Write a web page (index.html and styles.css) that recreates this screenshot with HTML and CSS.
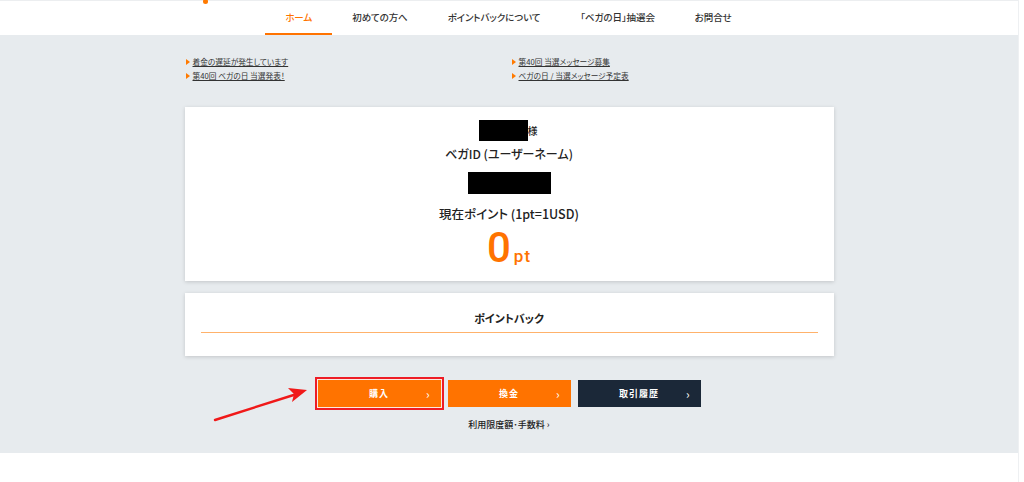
FILE: index.html
```html
<!DOCTYPE html>
<html lang="ja">

<head>
    <meta charset="UTF-8">
    <meta name="viewport" content="width=device-width, initial-scale=1.0">
    <title>ベガウォレット マイページ</title>
    <link rel="stylesheet" href="styles.css">
</head>

<body>
    <div class="page">
        <header class="header">
            <span class="logo-dot"></span>
            <nav class="nav">
                <a class="nav-item active" href="#">ホーム</a>
                <a class="nav-item" href="#">初めての方へ</a>
                <a class="nav-item" href="#">ポイントバックについて</a>
                <a class="nav-item" href="#">「ベガの日」抽選会</a>
                <a class="nav-item" href="#">お問合せ</a>
            </nav>
        </header>

        <main class="main">
            <div class="wrap">
                <ul class="news">
                    <li><a href="#">着金の遅延が発生しています</a></li>
                    <li><a href="#">第40回 当選メッセージ募集</a></li>
                    <li><a href="#">第40回 ベガの日 当選発表！</a></li>
                    <li><a href="#">ベガの日 / 当選メッセージ予定表</a></li>
                </ul>

                <section class="card account">
                    <div class="name-row"><span class="mask mask-name"></span><span class="sama">様</span></div>
                    <p class="label">ベガID (ユーザーネーム)</p>
                    <span class="mask mask-id"></span>
                    <p class="label label-point">現在ポイント (1pt=1USD)</p>
                    <p class="point"><span class="num">0</span><span class="unit">pt</span></p>
                </section>

                <section class="card pointback">
                    <h2 class="card-title">ポイントバック</h2>
                </section>

                <div class="actions">
                    <a class="btn btn-orange btn-marked" href="#"><span>購入</span><i>›</i></a>
                    <a class="btn btn-orange" href="#"><span>換金</span><i>›</i></a>
                    <a class="btn btn-dark" href="#"><span>取引履歴</span><i>›</i></a>
                </div>

                <a class="limit-link" href="#">利用限度額･手数料 ›</a>
            </div>

            <svg class="arrow" width="110" height="45" viewBox="0 0 110 45">
                <line x1="3" y1="40" x2="88" y2="13" stroke="#f01919" stroke-width="2.4" stroke-linecap="round" />
                <polygon points="95,10 76,8 82,14 80,22" fill="#f01919" />
            </svg>
        </main>

        <div class="bottom"></div>
    </div>
</body>

</html>
```

FILE: styles.css
```css
* {
    box-sizing: border-box;
}

html,
body {
    margin: 0;
    background-color: #ffffff;
}

body {
    font-family: "Noto Sans CJK JP", "Noto Sans", sans-serif;
    color: #222;
    font-feature-settings: "palt";
}

.page {
    width: 1019px;
    border-right: 1px solid #eef0f2;
}

/* header */
.header {
    position: relative;
    height: 35px;
    background-color: #fff;
    border-top: 1px solid #eceef0;
}

.logo-dot {
    position: absolute;
    left: 203px;
    top: -2px;
    width: 5px;
    height: 5px;
    border-radius: 50%;
    background-color: #ff7a00;
}

.nav {
    display: flex;
    justify-content: center;
    height: 34px;
    padding-right: 1px;
}

.nav-item {
    display: flex;
    align-items: center;
    padding: 0 20px;
    font-size: 9.5px;
    font-weight: 500;
    color: #333;
    text-decoration: none;
    letter-spacing: -0.1px;
    border-bottom: 2px solid transparent;
}

.nav-item.active {
    color: #ff7300;
    border-bottom-color: #ff7300;
}

/* main area */
.main {
    position: relative;
    background-color: #e7ebee;
    padding: 20px 0 21px;
}

.wrap {
    width: 649px;
    margin: 0 auto;
    display: flex;
    flex-direction: column;
    align-items: center;
}

.news {
    list-style: none;
    margin: 0;
    padding: 0;
    width: 100%;
    display: grid;
    grid-template-columns: 326px 1fr;
}

.news li {
    position: relative;
    height: 14px;
    line-height: 14px;
    padding-left: 8px;
    font-size: 7.7px;
}

.news li::before {
    content: "";
    position: absolute;
    left: 1px;
    top: 4px;
    border-left: 4px solid #ff7a00;
    border-top: 3px solid transparent;
    border-bottom: 3px solid transparent;
}

.news a {
    color: #333;
    text-decoration: underline;
}

.card {
    width: 100%;
    background-color: #fff;
    box-shadow: 0 1px 4px rgba(0, 0, 0, 0.16);
}

.account {
    margin-top: 24px;
    height: 174px;
    padding-top: 13px;
    display: flex;
    flex-direction: column;
    align-items: center;
}

.name-row {
    display: flex;
    align-items: center;
    height: 21px;
    padding-right: 2px;
}

.mask {
    display: block;
    background-color: #000;
}

.mask-name {
    width: 49px;
    height: 21px;
}

.sama {
    font-size: 10px;
    font-weight: 500;
}

.label {
    margin: 6px 0 0;
    font-size: 12px;
    line-height: 14px;
    font-weight: 500;
}

.mask-id {
    margin-top: 11px;
    width: 83px;
    height: 22px;
}

.label.label-point {
    margin-top: 13px;
    font-size: 12.5px;
}

.point {
    margin: 6px 0 0;
    line-height: 42px;
    color: #ff7300;
    font-family: Roboto, "Noto Sans", sans-serif;
    font-weight: 500;
}

.point .num {
    font-size: 42px;
}

.point .unit {
    font-size: 17px;
    margin-left: 3px;
    letter-spacing: 1px;
}

.pointback {
    margin-top: 12px;
    height: 63px;
    padding: 18px 16px 0;
}

.card-title {
    margin: 0;
    height: 22px;
    line-height: 14px;
    font-size: 11px;
    font-weight: 700;
    text-align: center;
    border-bottom: 1px solid #ffb26b;
}

/* buttons */
.actions {
    margin-top: 24px;
    display: flex;
    gap: 7px;
}

.btn {
    position: relative;
    display: flex;
    align-items: center;
    justify-content: center;
    width: 123px;
    height: 27px;
    color: #fff;
    font-size: 9px;
    font-weight: 700;
    text-decoration: none;
    letter-spacing: 1px;
}

.btn i {
    position: absolute;
    right: 10px;
    top: 50%;
    transform: translateY(-52%);
    font-style: normal;
    font-size: 12px;
    font-weight: 400;
}

.btn-orange {
    background-color: #ff7300;
}

.btn-dark {
    background-color: #1b2838;
}

.btn-marked {
    box-shadow: 0 0 0 1px #fbe9e0, 0 0 0 3px #ee1c25;
}

.limit-link {
    margin-top: 11px;
    line-height: 14px;
    font-size: 9px;
    font-weight: 500;
    color: #222;
    text-decoration: none;
}

.arrow {
    position: absolute;
    left: 212px;
    top: 345px;
}

.bottom {
    height: 40px;
    background-color: #fff;
}
```
